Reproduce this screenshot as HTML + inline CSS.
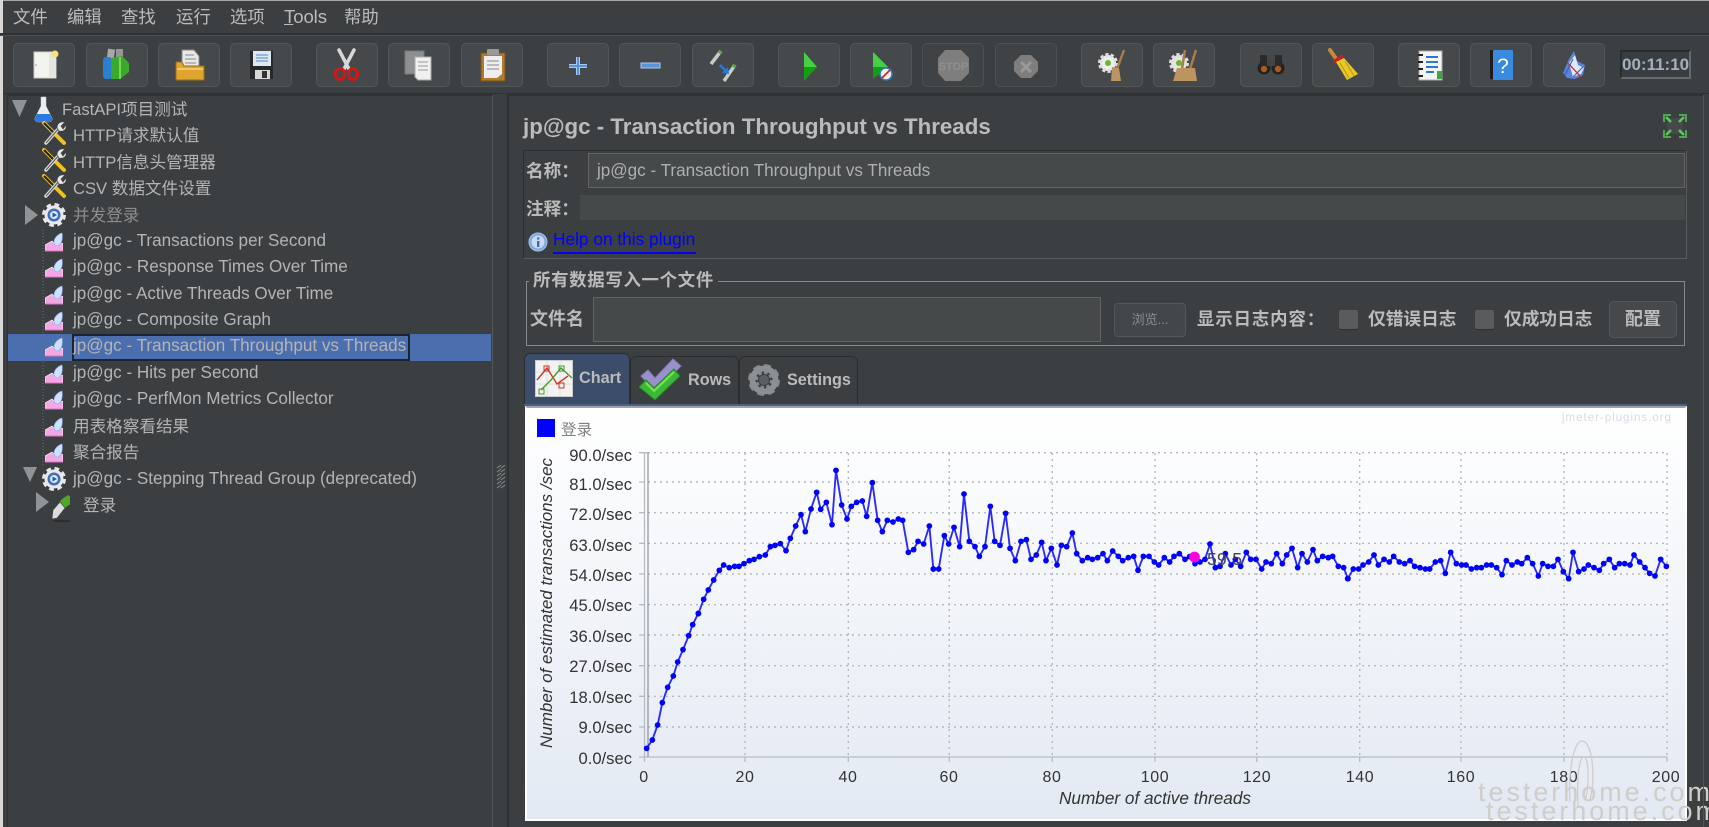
<!DOCTYPE html>
<html><head><meta charset="utf-8"><style>
html,body{margin:0;padding:0;background:#3c3f41}
body{position:relative;width:1709px;height:827px;overflow:hidden;font-family:"Liberation Sans","Noto Sans CJK SC",sans-serif;color:#bbb}
.a{position:absolute;white-space:nowrap}
.t{position:absolute;white-space:nowrap;line-height:24px;height:24px;font-size:16.6px;color:#b4b4b4}
.j{font-size:17.1px}
.m{position:absolute;top:5px;line-height:24px;font-size:17.4px;color:#bbb;white-space:nowrap}
.b{position:absolute;top:43px;width:62px;height:44px;box-sizing:border-box;background:#45494b;border:1px solid #525657;border-radius:5px}
.b svg{position:absolute;left:-1px;top:-1px}
.l{position:absolute;white-space:nowrap;font-weight:700;font-size:17.6px;line-height:24px;color:#bbb}
.in{position:absolute;box-sizing:border-box;background:#45494a;border:1px solid #646464}
.ti{position:absolute;left:45px;width:18px;height:20px}
.tab{position:absolute;box-sizing:border-box;background:#3c3f41;border:1px solid #2b2d2e;border-bottom:none;border-radius:6px 6px 0 0}
</style></head><body>
<svg width="0" height="0" style="position:absolute"><defs>
<symbol id="cg" viewBox="0 0 18 20"><path d="M0 19V13L7 9 11 13 18 11V19Z" fill="#f3a8e4" stroke="#fff" stroke-width=".6"/><path d="M9 10C9 6 13 2 17 1 18 6 17 12 13 14 11 14 9 13 9 10Z" fill="#cfe0ff" stroke="#88a8e8" stroke-width=".6"/><path d="M0 19H18" stroke="#e070c8" stroke-width="1"/></symbol>
<symbol id="wr" viewBox="0 0 26 26"><path d="M3 3 23 23" stroke="#f0c020" stroke-width="4" stroke-linecap="round"/><path d="M3 3 14 14" stroke="#222" stroke-width="2"/><path d="M5 23 19 7" stroke="#ddd" stroke-width="3.5" stroke-linecap="round"/><path d="M5 23 19 7" stroke="#555" stroke-width="1"/><path d="M16 8C16 3 20 1 24 2L20 6 22 9 25 5C26 10 22 12 18 11Z" fill="#e8e8e8" stroke="#444" stroke-width=".7"/></symbol>
<symbol id="ge" viewBox="0 0 26 26"><circle cx="13" cy="13" r="9" fill="#e8e8e8" stroke="#e8e8e8" stroke-width="6" stroke-dasharray="4 3.1"/><circle cx="13" cy="13" r="9.5" fill="#e8e8e8"/><circle cx="13" cy="13" r="6.5" fill="#3d6fc0"/><circle cx="13" cy="13" r="4" fill="#dbe6f8"/><path d="M11.5 10.5 16 13 11.5 15.5Z" fill="#2a57a8"/></symbol>
<marker id="d" markerWidth="20" markerHeight="20" refX="10" refY="10" markerUnits="userSpaceOnUse"><circle cx="10" cy="10" r="8.6" fill="#0000ff"/></marker>
</defs></svg>

<div class="a" style="left:0;top:0;width:1709px;height:1px;background:#a8a8a8"></div>
<div class="a" style="left:0;top:0;width:3px;height:827px;background:#d8d8d8"></div>
<div class="a" style="left:0;top:33px;width:1709px;height:2px;background:#2f3234"></div>
<div class="a" style="left:0;top:35px;width:1709px;height:1px;background:#4c4f51"></div>
<div class="a" style="left:3px;top:93px;width:1706px;height:1px;background:#2f3234"></div>

<span class="m" style="left:13px">文件</span><span class="m" style="left:67px">编辑</span><span class="m" style="left:121px">查找</span><span class="m" style="left:176px">运行</span><span class="m" style="left:230px">选项</span><span class="m" style="left:284px;font-size:18.6px;letter-spacing:-.1px"><u>T</u>ools</span><span class="m" style="left:344px">帮助</span>

<!-- toolbar -->
<div class="b" style="left:13px"><svg width="62" height="44"><rect x="21" y="9" width="22" height="26" fill="#f4f4ee" stroke="#ccc"/><rect x="36" y="9" width="7" height="26" fill="#e6e6e0"/><circle cx="42" cy="11" r="3.5" fill="#f6e27a"/><circle cx="23" cy="22" r=".8" fill="#999"/></svg></div>
<div class="b" style="left:86px"><svg width="62" height="44"><rect x="21" y="6" width="7" height="18" fill="#a8a8a8" transform="rotate(8 24 14)"/><rect x="30" y="6" width="7" height="16" fill="#969696"/><rect x="17" y="14" width="9" height="22" rx="3" fill="#2a7fd0"/><path d="M25 15 L36 13 43 20 V29 L34 36 H25Z" fill="#3aaa2c"/><path d="M34 14V36" stroke="#7ad45a" stroke-width="2"/></svg></div>
<div class="b" style="left:158px"><svg width="62" height="44"><path d="M24 7H36L41 13V24H24Z" fill="#e8e8e8" stroke="#888"/><path d="M27 12H36M27 16H38M27 20H38" stroke="#888"/><path d="M18 19H24L26 23H46V37H18Z" fill="#e0a52e" stroke="#9a6d12"/><path d="M19 26H45" stroke="#f1c766" stroke-width="2"/></svg></div>
<div class="b" style="left:230px"><svg width="62" height="44"><path d="M20 8H43V36H20Z" fill="#26282a"/><rect x="23" y="8" width="18" height="15" fill="#dfe8f2"/><path d="M26 12H38M26 15H38M26 18H38" stroke="#6a9ad0" stroke-width="1.2"/><rect x="25" y="27" width="15" height="9" fill="#d8d8d8"/><rect x="32" y="28" width="5" height="7" fill="#333"/></svg></div>
<div class="b" style="left:316px"><svg width="62" height="44"><path d="M23 7 33 26M38 7 28 26" stroke="#d8d8d8" stroke-width="3.5" stroke-linecap="round"/><ellipse cx="24" cy="31" rx="4.6" ry="5.5" fill="none" stroke="#d01818" stroke-width="3"/><ellipse cx="37" cy="31" rx="4.6" ry="5.5" fill="none" stroke="#d01818" stroke-width="3"/></svg></div>
<div class="b" style="left:388px"><svg width="62" height="44"><rect x="17" y="8" width="19" height="23" fill="#8d8f90" stroke="#777"/><path d="M27 14H43V37H30L27 34Z" fill="#f0f0f0" stroke="#aaa"/><path d="M30 19H40M30 23H40M30 27H40" stroke="#999"/></svg></div>
<div class="b" style="left:461px"><svg width="62" height="44"><rect x="20" y="10" width="24" height="28" fill="#b27a2c" stroke="#7c5318"/><rect x="26" y="6" width="12" height="6" rx="1" fill="#999"/><path d="M23 13H41V31L36 35H23Z" fill="#eee"/><path d="M26 18H38M26 22H38M26 26H38" stroke="#888"/></svg></div>
<div class="b" style="left:547px"><svg width="62" height="44"><path d="M31 14V32M22 23H40" stroke="#a8c8f0" stroke-width="4"/><path d="M31 14V32M22 23H40" stroke="#5a94d8" stroke-width="2"/></svg></div>
<div class="b" style="left:619px"><svg width="62" height="44"><rect x="22" y="20" width="19" height="5" fill="#5a94d8" stroke="#a8c8f0"/></svg></div>
<div class="b" style="left:692px"><svg width="62" height="44"><path d="M19 21 29 8" stroke="#c8ccc8" stroke-width="3.5"/><path d="M27 10 29 8" stroke="#5aa83a" stroke-width="4"/><path d="M32 38 43 22" stroke="#c8ccc8" stroke-width="3.5"/><path d="M41 24 43 22" stroke="#5aa83a" stroke-width="4"/><path d="M28 22 35 29" stroke="#2a78d8" stroke-width="2.5"/><path d="M37 31 30 30 36 24Z" fill="#2a78d8"/></svg></div>
<div class="b" style="left:778px"><svg width="62" height="44"><path d="M26 9 39 24 26 38Z" fill="#12a012"/><path d="M26 9 39 24H26Z" fill="#46d046"/></svg></div>
<div class="b" style="left:850px"><svg width="62" height="44"><path d="M23 9 38 24 23 36Z" fill="#12a012"/><path d="M23 9 38 24H23Z" fill="#46d046"/><circle cx="36" cy="31" r="6" fill="#f0f0f0" stroke="#3a78c8" stroke-width="1.5"/><path d="M32 35 40 27" stroke="#c82020" stroke-width="1.6"/></svg></div>
<div class="b" style="left:922px;border-color:#4d5051;background:#3f4345"><svg width="62" height="44"><path d="M23 7H39L47 15V30L39 38H23L16 30V15Z" fill="#7e7e7e"/><text x="31.5" y="27" font-size="11" font-weight="700" text-anchor="middle" fill="#8f8f8f" font-family="Liberation Sans">STOP</text></svg></div>
<div class="b" style="left:995px;border-color:#4d5051;background:#3f4345"><svg width="62" height="44"><path d="M26 12H36L43 19V28L36 35H26L19 28V19Z" fill="#7e7e7e"/><path d="M26 19 36 29M36 19 26 29" stroke="#999" stroke-width="3"/></svg></div>
<div class="b" style="left:1081px"><svg width="62" height="44"><circle cx="27" cy="20" r="8" fill="#eee" stroke="#ddd" stroke-width="4" stroke-dasharray="3 2"/><circle cx="27" cy="20" r="3" fill="#6ab82a"/><path d="M43 7 36 26" stroke="#a87c4a" stroke-width="2.5"/><path d="M31 24 38 25 40 38H30Z" fill="#bd9360"/></svg></div>
<div class="b" style="left:1153px"><svg width="62" height="44"><circle cx="26" cy="20" r="8" fill="#e4e4e4" stroke="#ddd" stroke-width="4" stroke-dasharray="3 2"/><circle cx="26" cy="20" r="3" fill="#6ab82a"/><path d="M32 7 29 26M43 7 37 26" stroke="#a87c4a" stroke-width="2.5"/><path d="M24 25H42L44 38H20Z" fill="#bd9360"/></svg></div>
<div class="b" style="left:1240px"><svg width="62" height="44"><circle cx="24" cy="25" r="6.5" fill="#222"/><circle cx="38" cy="25" r="6.5" fill="#222"/><rect x="20" y="12" width="7" height="11" fill="#2a2a2a"/><rect x="35" y="12" width="7" height="11" fill="#2a2a2a"/><rect x="27" y="16" width="8" height="7" fill="#444"/><circle cx="24" cy="26" r="3.2" fill="#a85a20"/><circle cx="38" cy="26" r="3.2" fill="#a85a20"/></svg></div>
<div class="b" style="left:1312px"><svg width="62" height="44"><path d="M18 7 25 17" stroke="#c88a38" stroke-width="4" stroke-linecap="round"/><path d="M22 19 31 13" stroke="#c82020" stroke-width="4"/><path d="M24 19 32 15 46 31 35 37Z" fill="#e8c828"/><path d="M28 20 37 35M33 18 42 33" stroke="#b89410"/></svg></div>
<div class="b" style="left:1398px"><svg width="62" height="44"><rect x="21" y="8" width="23" height="29" fill="#f4f4f4" stroke="#aaa"/><path d="M20 12H25M20 19H25M20 26H25M20 33H25" stroke="#222" stroke-width="2"/><path d="M28 14H40M28 19H40M28 24H40M28 29H36" stroke="#2a78d8" stroke-width="2"/><rect x="39" y="28" width="5" height="8" fill="#3aa83a"/></svg></div>
<div class="b" style="left:1470px"><svg width="62" height="44"><rect x="20" y="7" width="5" height="29" fill="#1c1c1c"/><rect x="23" y="7" width="20" height="30" rx="1" fill="#3a8ae0"/><text x="33" y="30" font-size="21" fill="#fff" text-anchor="middle" font-family="Liberation Sans">?</text></svg></div>
<div class="b" style="left:1543px"><svg width="62" height="44"><path d="M20 30 26 16 31 8 34 18 42 22 40 32 32 36 24 35Z" fill="#5a84d8"/><path d="M26 20 32 12 35 22 41 25 38 31 30 34Z" fill="#dfe8fa"/><path d="M24 19 38 34" stroke="#d03030" stroke-width="1.3"/><path d="M22 32 30 16M30 34 40 24" stroke="#3a62c0" stroke-width="1.2"/></svg></div>
<div class="a" style="left:1620px;top:50px;width:71px;height:29px;box-sizing:border-box;background:#3a3d3f;border:2px solid;border-color:#2a2c2d #65696b #65696b #2a2c2d;text-align:center;line-height:25px;font-size:17px;font-weight:700;color:#a3b0bd">00:11:10</div>

<!-- panes -->
<div class="a" style="left:7px;top:94px;width:486px;height:733px;box-sizing:border-box;border-top:2px solid #2f3234;border-left:1px solid #2f3234;border-right:1px solid #55585a"></div>
<div class="a" style="left:507px;top:94px;width:1197px;height:733px;box-sizing:border-box;border-top:2px solid #2f3234;border-left:2px solid #2f3234;border-right:1px solid #505355"></div>
<svg class="a" style="left:496px;top:465px" width="10" height="25"><path d="M1 3 5 0M1 7 5 4M1 11 5 8M1 15 5 12M1 19 5 16M1 23 5 20M5 3 9 0M5 7 9 4M5 11 9 8M5 15 9 12M5 19 9 16M5 23 9 20" stroke="#8a8d8f" stroke-width="1"/></svg>

<!-- tree -->
<div class="a" style="left:8px;top:334px;width:483px;height:27px;background:#4b6eaf"></div>
<div class="a" style="left:72px;top:334px;width:338px;height:27px;box-sizing:border-box;border:2px solid #1b2433"></div>
<svg class="a" style="left:0;top:95px" width="70" height="430">
<path d="M43 135V372" stroke="#6a6d6f" stroke-dasharray="1 2" fill="none"/>
<path d="M12 5H27L19.5 22Z" fill="#909496"/>
<path d="M25 110 38 120 25 130Z" fill="#909496"/>
<path d="M23 372H37L30 387Z" fill="#909496"/>
<path d="M36 397 49 407 36 417Z" fill="#909496"/>
<path d="M41 2H46V11L52 23Q53 27 48 27H39Q34 27 35 23L41 11Z" fill="#e8eef4" stroke="#cfd4d8" stroke-width=".5"/><path d="M37 19H50L52 23Q53 27 48 27H39Q34 27 35 23Z" fill="#2a78e0"/>
<use href="#wr" x="41" y="25" width="26" height="26"/><use href="#wr" x="41" y="52" width="26" height="26"/><use href="#wr" x="41" y="78" width="26" height="26"/>
<use href="#ge" x="41" y="107" width="26" height="26"/><use href="#ge" x="41" y="371" width="26" height="26"/>
<path d="M53 415 62 404 68 400 74 404 72 408 66 412 57 423Z" fill="#4ca82a"/><path d="M53 415 60 407 65 413 57 423 52 424Z" fill="#ddd" stroke="#444" stroke-width=".6"/><ellipse cx="62" cy="426" rx="10" ry="1.2" fill="#2c2e30"/>
</svg>
<span class="t" style="left:62px;top:98px">FastAPI项目测试</span>
<span class="t" style="left:73px;top:124px">HTTP请求默认值</span>
<span class="t" style="left:73px;top:151px">HTTP信息头管理器</span>
<span class="t" style="left:73px;top:177px">CSV 数据文件设置</span>
<span class="t" style="left:73px;top:204px;color:#8d8d8d">并发登录</span>
<span class="t j" style="left:73px;top:229px">jp@gc - Transactions per Second</span>
<span class="t j" style="left:73px;top:255px">jp@gc - Response Times Over Time</span>
<span class="t j" style="left:73px;top:282px">jp@gc - Active Threads Over Time</span>
<span class="t j" style="left:73px;top:308px">jp@gc - Composite Graph</span>
<span class="t j" style="left:73px;top:334px">jp@gc - Transaction Throughput vs Threads</span>
<span class="t j" style="left:73px;top:361px">jp@gc - Hits per Second</span>
<span class="t j" style="left:73px;top:387px">jp@gc - PerfMon Metrics Collector</span>
<span class="t" style="left:73px;top:415px">用表格察看结果</span>
<span class="t" style="left:73px;top:441px">聚合报告</span>
<span class="t j" style="left:73px;top:467px">jp@gc - Stepping Thread Group (deprecated)</span>
<span class="t" style="left:83px;top:494px">登录</span>
<svg class="ti" style="top:232px"><use href="#cg"/></svg><svg class="ti" style="top:258px"><use href="#cg"/></svg><svg class="ti" style="top:285px"><use href="#cg"/></svg><svg class="ti" style="top:311px"><use href="#cg"/></svg><svg class="ti" style="top:337px"><use href="#cg"/></svg><svg class="ti" style="top:364px"><use href="#cg"/></svg><svg class="ti" style="top:390px"><use href="#cg"/></svg><svg class="ti" style="top:417px"><use href="#cg"/></svg><svg class="ti" style="top:443px"><use href="#cg"/></svg>

<!-- main header -->
<div class="a" style="left:523px;top:113px;font-size:22.3px;font-weight:700;line-height:28px;color:#bbb">jp@gc - Transaction Throughput vs Threads</div>
<svg class="a" style="left:1663px;top:114px" width="24" height="24"><rect x="4" y="4" width="16" height="16" fill="#45494a"/><path d="M1 8V1H8M16 1H23V8M23 16V23H16M8 23H1V16" fill="none" stroke="#4ca84c" stroke-width="2"/><path d="M3 3 8 8M21 3 16 8M21 21 16 16M3 21 8 16" stroke="#5cc85c" stroke-width="2.5"/></svg>

<div class="a" style="left:523px;top:150px;width:1164px;height:109px;box-sizing:border-box;border:1px solid;border-color:#2c2e2f #5a5d5f #5a5d5f #2c2e2f"></div>
<span class="l" style="left:526px;top:159px">名称：</span>
<div class="in" style="left:588px;top:153px;width:1097px;height:35px;line-height:33px;padding-left:8px;font-size:17.1px;color:#aeb0b0">jp@gc - Transaction Throughput vs Threads</div>
<span class="l" style="left:526px;top:197px">注释：</span>
<div class="a" style="left:580px;top:195px;width:1105px;height:25px;background:#45494a"></div>
<svg class="a" style="left:528px;top:232px" width="20" height="20"><circle cx="10" cy="10" r="9" fill="#7fa8dc" stroke="#a8c4ea"/><circle cx="10" cy="10" r="6.5" fill="#c8daf4"/><rect x="9" y="9" width="2.4" height="6" fill="#3a6ab0"/><rect x="9" y="5.5" width="2.4" height="2" fill="#3a6ab0"/></svg>
<div class="a" style="left:553px;top:227px;font-size:17.3px;line-height:24px;color:#0000ff">Help on this plugin</div>
<div class="a" style="left:553px;top:252px;width:143px;height:2px;background:#0000ff"></div>

<!-- file panel -->
<div class="a" style="left:526px;top:281px;width:1159px;height:65px;box-sizing:border-box;border:1.5px solid #85898a"></div>
<div class="a" style="left:529px;top:268px;height:24px;padding:0 4px;background:#3c3f41;font-weight:700;font-size:17.4px;line-height:24px;color:#bbb;letter-spacing:.7px">所有数据写入一个文件</div>
<span class="l" style="left:530px;top:307px;font-size:18px">文件名</span>
<div class="in" style="left:593px;top:297px;width:508px;height:45px"></div>
<div class="a" style="left:1114px;top:303px;width:72px;height:34px;box-sizing:border-box;background:#43474a;border:1px solid #53575a;border-radius:4px;text-align:center;line-height:32px;font-size:13px;color:#8a8d90">浏览...</div>
<span class="l" style="left:1197px;top:307px;font-size:17.4px;letter-spacing:.9px">显示日志内容：</span>
<div class="a" style="left:1339px;top:310px;width:19px;height:19px;background:#595b5d;border-radius:2px;box-shadow:0 1px 0 #2e3032"></div>
<span class="l" style="left:1368px;top:307px;font-size:17.7px">仅错误日志</span>
<div class="a" style="left:1475px;top:310px;width:19px;height:19px;background:#595b5d;border-radius:2px;box-shadow:0 1px 0 #2e3032"></div>
<span class="l" style="left:1504px;top:307px;font-size:17.7px">仅成功日志</span>
<div class="a" style="left:1609px;top:301px;width:68px;height:37px;box-sizing:border-box;background:#45494b;border:1px solid #55595a;border-radius:5px;text-align:center;line-height:35px;font-size:18px;font-weight:700;color:#bbb">配置</div>

<!-- tabs -->
<div class="a" style="left:524px;top:404px;width:1163px;height:2px;background:#4a5f82"></div>
<div class="tab" style="left:524px;top:353px;width:106px;height:51px;background:#3c4d6b"></div>
<div class="tab" style="left:630px;top:356px;width:109px;height:48px"></div>
<div class="tab" style="left:739px;top:356px;width:119px;height:48px"></div>
<svg class="a" style="left:535px;top:360px" width="38" height="37"><rect x=".5" y=".5" width="37" height="36" fill="#f2f2f2" stroke="#ccc"/><path d="M1 12H37M1 24H37M12 1V36M25 1V36" stroke="#ddd"/><path d="M2 20 12 8 22 24 33 16" fill="none" stroke="#c83a2a" stroke-width="1.4"/><path d="M6 30 16 20 26 8 37 18" fill="none" stroke="#4a9a2a" stroke-width="1.4"/><rect x="9" y="6" width="5" height="5" fill="none" stroke="#c83a2a"/><rect x="24" y="23" width="5" height="5" fill="none" stroke="#c83a2a"/><rect x="24" y="6" width="5" height="5" fill="none" stroke="#4a9a2a"/><rect x="4" y="29" width="5" height="5" fill="none" stroke="#4a9a2a"/></svg>
<span class="a" style="left:579px;top:366px;font-weight:700;font-size:16.2px;line-height:24px;color:#bbb">Chart</span>
<svg class="a" style="left:638px;top:358px" width="44" height="44"><path d="M3 18 10 12 17 20 35 1 43 8 17 34Z" fill="#9a90cc" stroke="#8278b4"/><path d="M1 29 8 22 16 30 36 11 42 18 17 42Z" fill="#3cb838" stroke="#1c8a1c"/><path d="M8 25 16 33 36 14" fill="none" stroke="#7ae05a" stroke-width="2"/></svg>
<span class="a" style="left:688px;top:368px;font-weight:700;font-size:16.2px;line-height:24px;color:#bbb">Rows</span>
<svg class="a" style="left:747px;top:363px" width="34" height="34"><circle cx="17" cy="17" r="11" fill="none" stroke="#85888a" stroke-width="10" stroke-dasharray="5.2 3.4"/><circle cx="17" cy="17" r="11.5" fill="none" stroke="#8d9092" stroke-width="6"/><circle cx="17" cy="17" r="5" fill="#5c5f61"/></svg>
<span class="a" style="left:787px;top:368px;font-weight:700;font-size:16.2px;line-height:24px;color:#bbb">Settings</span>

<!-- chart -->
<div class="a" style="left:525px;top:406px;width:1162px;height:415px;box-sizing:border-box;border-top:2px solid #a0a2a5;border-left:2px solid #fff;border-right:2px solid #fff;border-bottom:2px solid #fff;background:linear-gradient(#fff,#e3e9f3)"></div>
<svg class="a" style="left:0;top:0" width="1709" height="827" font-family="Liberation Sans">
<g stroke="#b6b8bc" stroke-width="1.4" stroke-dasharray="2 4" fill="none">
<path d="M648 452.7H1667M648 482H1667M648 512.7H1667M648 543.3H1667M648 574H1667M648 604.7H1667M648 635H1667M648 665.7H1667M648 696.3H1667M648 727H1667"/>
<path d="M745 453V757M848.3 453V757M949.3 453V757M1052.3 453V757M1155 453V757M1256.7 453V757M1359.7 453V757M1461 453V757M1564 453V757M1667 453V757"/>
</g>
<g stroke="#b7bbc4" stroke-width="1.3" fill="none">
<path d="M644.5 452V757H1667M648 452.7H644"/>
<path d="M639 452.7H644M639 482H644M639 512.7H644M639 543.3H644M639 574H644M639 604.7H644M639 635H644M639 665.7H644M639 696.3H644M639 727H644M639 757H644"/>
<path d="M644.5 757V762M745 757V762M848.3 757V762M949.3 757V762M1052.3 757V762M1155 757V762M1256.7 757V762M1359.7 757V762M1461 757V762M1564 757V762M1667 757V762"/>
</g>
<path d="M648 452.7V757" stroke="#8e9196" stroke-width="1.2"/>
<g font-size="16.6" fill="#333" text-anchor="end">
<text x="632" y="461">90.0/sec</text><text x="632" y="490">81.0/sec</text><text x="632" y="520">72.0/sec</text><text x="632" y="551">63.0/sec</text><text x="632" y="581">54.0/sec</text><text x="632" y="611">45.0/sec</text><text x="632" y="642">36.0/sec</text><text x="632" y="672">27.0/sec</text><text x="632" y="703">18.0/sec</text><text x="632" y="733">9.0/sec</text><text x="632" y="764">0.0/sec</text>
</g>
<g font-size="16" fill="#333" text-anchor="middle" letter-spacing=".6">
<text x="644" y="782">0</text><text x="745" y="782">20</text><text x="848" y="782">40</text><text x="949" y="782">60</text><text x="1052" y="782">80</text><text x="1155" y="782">100</text><text x="1257" y="782">120</text><text x="1360" y="782">140</text><text x="1461" y="782">160</text><text x="1564" y="782">180</text><text x="1666" y="782">200</text>
</g>
<text x="1155" y="804" font-size="17.2" font-style="italic" fill="#333" text-anchor="middle">Number of active threads</text>
<text transform="translate(552,603) rotate(-90)" font-size="17" font-style="italic" fill="#333" text-anchor="middle">Number of estimated transactions /sec</text>
<rect x="537" y="419" width="18" height="18" fill="#0000ff"/>
<text x="561" y="435" font-size="15.6" fill="#808080" font-family="Liberation Sans,Noto Sans CJK SC">登录</text>
<text x="1562" y="421" font-size="11.6" font-weight="400" fill="#d8dbe2" letter-spacing=".95">jmeter-plugins.org</text>
<g fill="none" stroke="#2a2aff" stroke-width="5.6" stroke-linejoin="round" marker-start="url(#d)" marker-mid="url(#d)" marker-end="url(#d)">
<polyline transform="translate(520,610) scale(.33333)" points="380,415 397,390 413,345 427,278 443,232 460,198 473,156 489,119 506,77 518,44 535,10"/>
<polyline transform="translate(520,405) scale(.33333)" points="535,626 551,583 565,555 581,525 598,496 611,480 628,488 644,484 657,484 672,476 688,467 702,463 718,455 736,450 751,425 765,421 781,416 798,437 811,400 827,363 843,329 856,380 873,312 890,262 902,313 919,292 936,359 948,196 965,300 981,342 994,304 1010,292 1027,288 1040,334 1057,233 1073,346 1087,380 1102,346 1119,351 1135,342 1148,346 1165,442 1181,434 1194,409 1211,417 1228,363 1240,492"/>
<polyline transform="translate(930,405) scale(.33333)" points="10,492 26,492 43,392 56,417 72,367 89,425 102,267 118,409 135,425 148,454 165,425 181,304 194,409 210,421 227,325 240,430 256,467 273,409 289,404 303,463 319,450 335,412 348,467 364,430 381,480 394,421 410,425 427,384 440,446 457,467 473,458 487,463 503,458 519,446 532,467 548,438 565,454 578,467 595,458 611,454 624,496 640,454 657,454 673,471 686,480 703,458 719,471 732,454 748,446 765,463 779,455 795,476 810,471 825,463 840,417 856,488 870,484 886,446 903,480 916,463 932,484 949,442 962,463 978,463 995,492 1008,471 1024,476 1040,446 1057,476 1070,450 1086,430 1103,488 1116,446 1132,471 1149,434 1162,467 1178,454 1195,458 1208,454 1225,484 1241,488 1254,521"/>
<polyline transform="translate(1340,405) scale(.33333)" points="23,521 40,492 56,492 69,480 86,471 102,450 115,480 132,463 148,471 161,454 178,471 194,476 210,467 224,484 240,488 256,492 269,492 286,471 302,467 316,505 332,442 349,476 365,480 378,480 394,492 410,488 424,488 440,480 454,480 470,488 486,509 499,467 516,480 532,471 545,476 562,458 578,476 595,513 608,476 624,484 640,484 654,463 670,500 686,521 699,442 716,500 732,492 745,480 762,488 778,496 791,476 808,463 824,488 838,476 854,476 870,480 882,450 899,471 915,488 929,505 945,513 962,463 979,484"/>
</g>
<circle cx="1194.5" cy="557" r="5.4" fill="#ff00e0"/>
<text x="1207" y="565" font-size="17.5" fill="#444" letter-spacing=".3">59.5</text>
<!-- watermark -->
<g fill="#cfcdc8" font-family="Liberation Sans" font-size="27">
<text x="1478" y="801" textLength="232" lengthAdjust="spacing">testerhome.com</text>
<text x="1486" y="820" textLength="232" lengthAdjust="spacing">testerhome.com</text>
</g>
<path d="M1570 802C1568 770 1574 741 1582 741 1592 741 1596 775 1590 800M1586 798C1590 775 1588 755 1583 757 1578 760 1577 785 1578 808" fill="none" stroke="#cfcdc8" stroke-width="1.3"/>
</svg>
<div class="a" style="left:1703px;top:95px;width:1px;height:732px;background:#505355"></div>
</body></html>
